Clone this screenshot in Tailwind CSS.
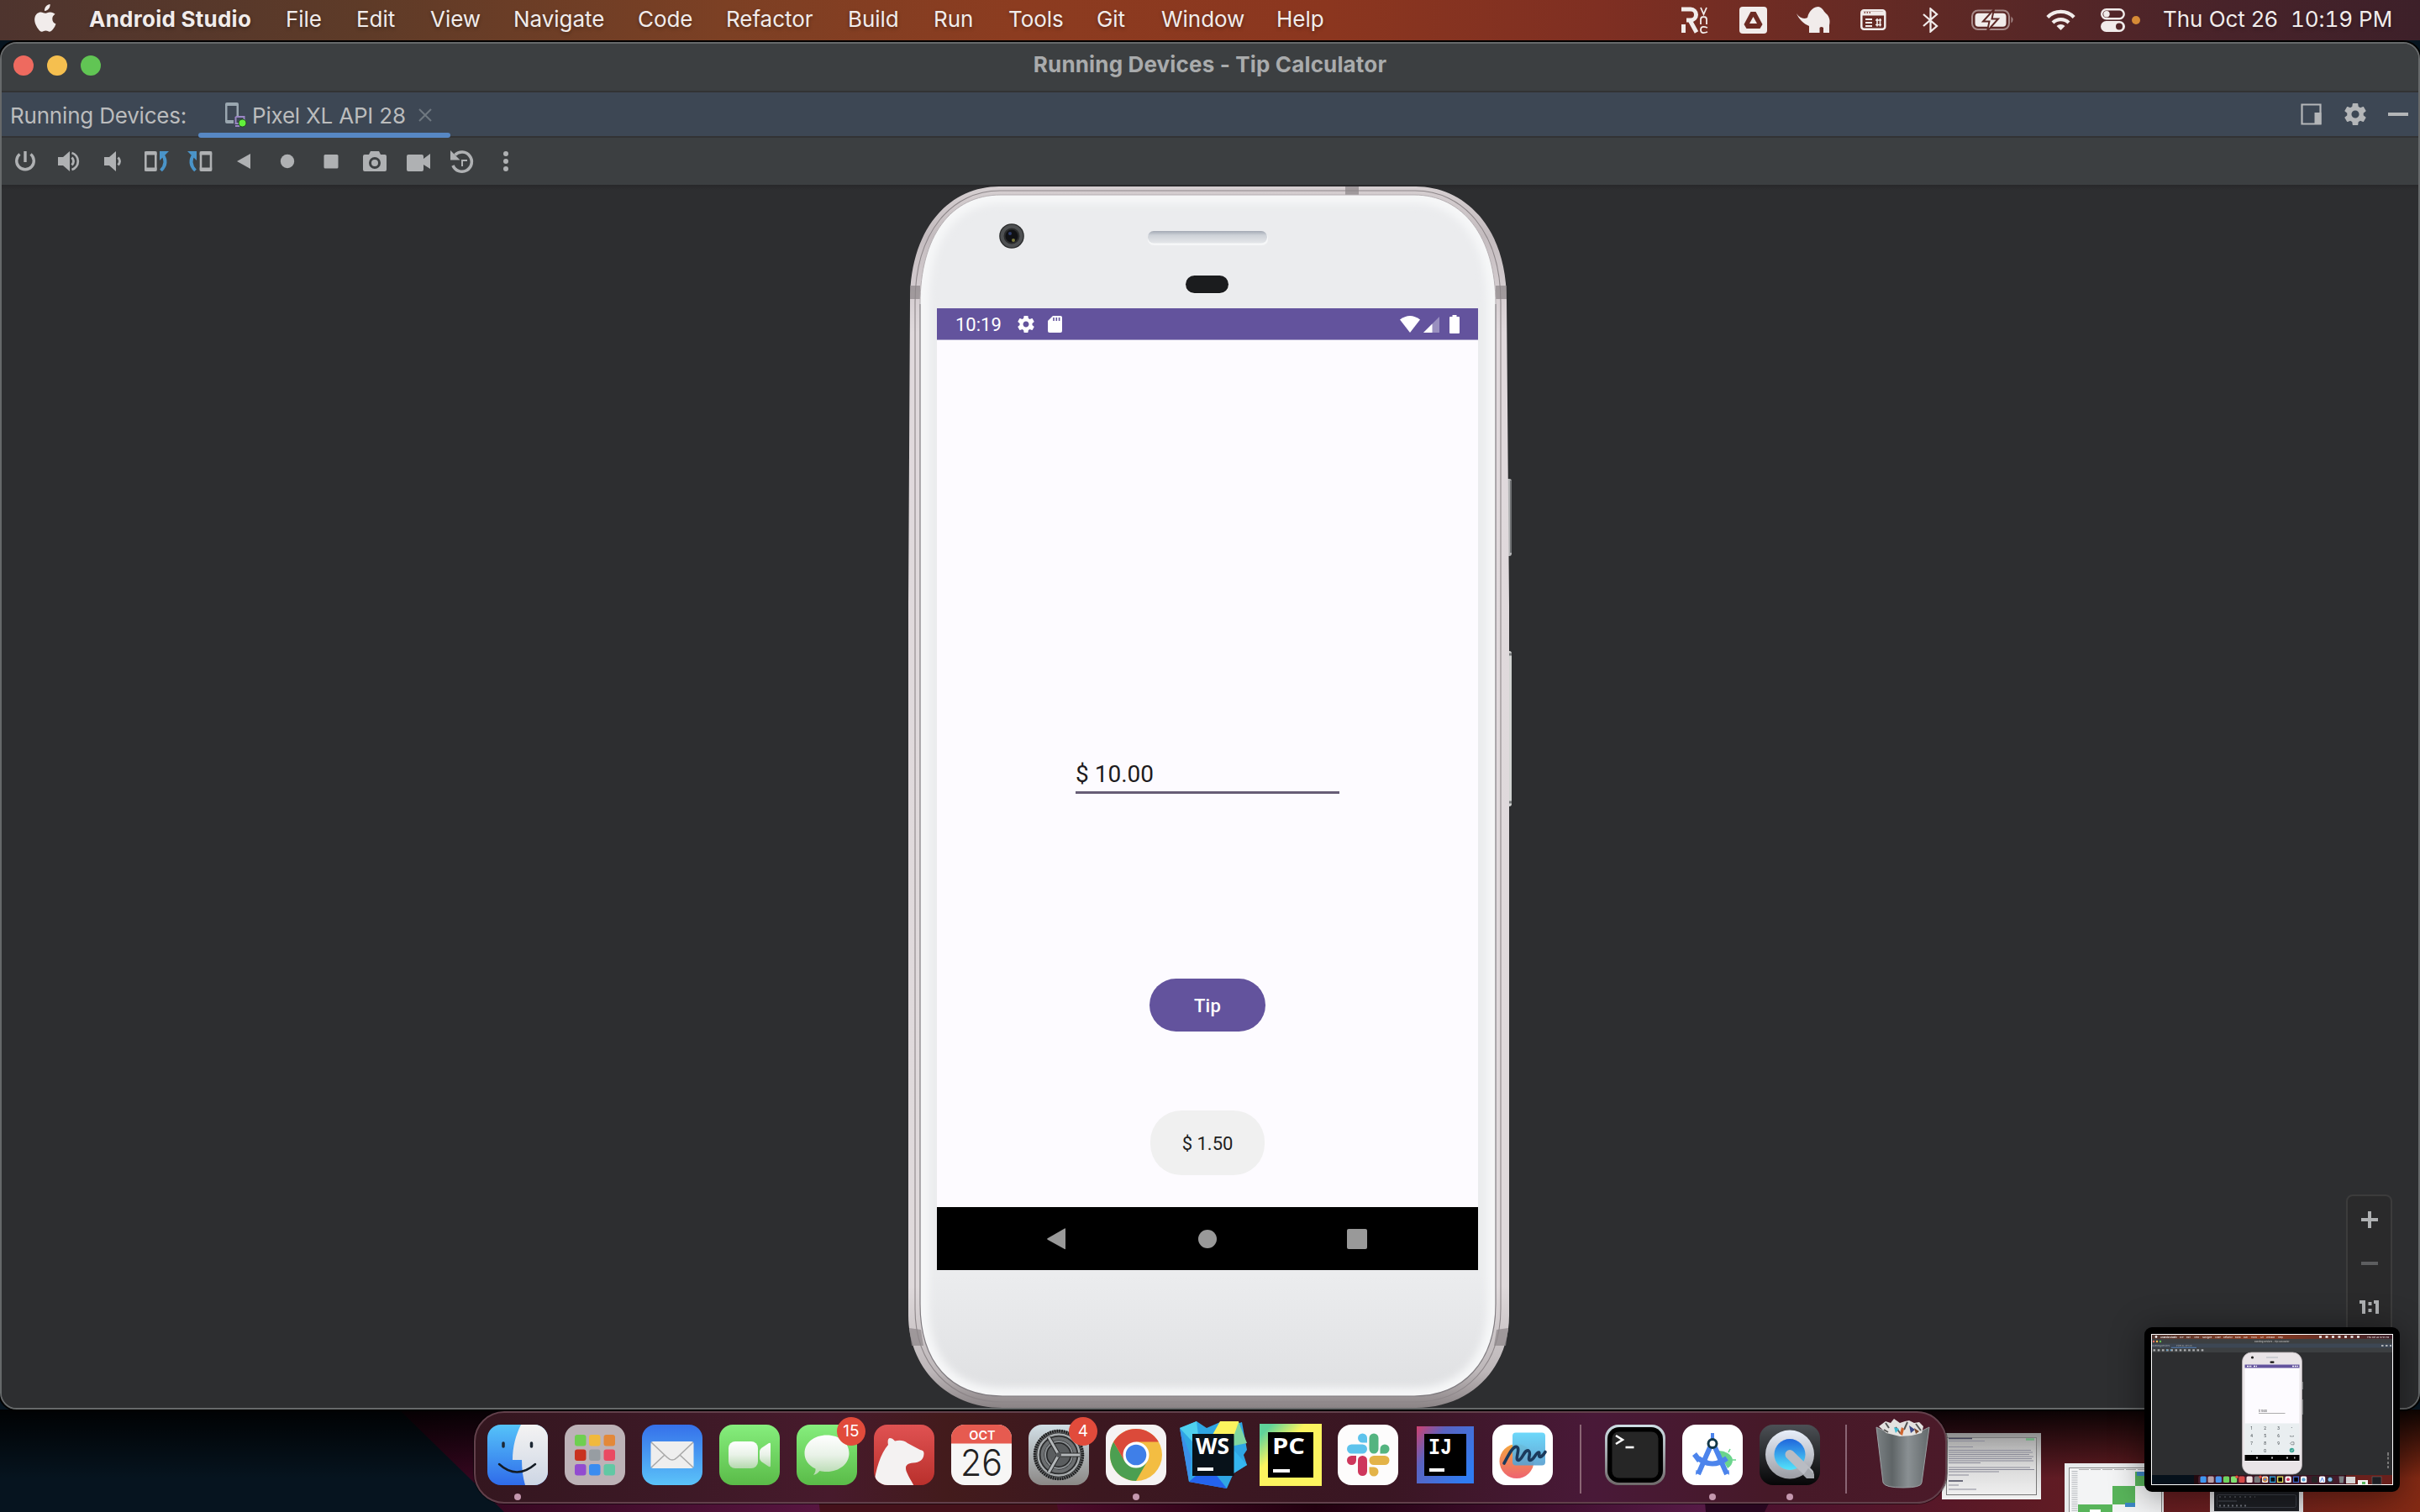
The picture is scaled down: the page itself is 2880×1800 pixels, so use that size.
<!DOCTYPE html>
<html lang="en">
<head>
<meta charset="utf-8">
<title>Running Devices - Tip Calculator</title>
<script src="https://cdn.jsdelivr.net/npm/@tailwindcss/browser@4"></script>
</head>
<body class="relative w-[2880px] h-[1800px] overflow-hidden bg-[#06141f] font-['Inter',sans-serif]">

<!-- Wallpaper -->
<svg class="absolute inset-0" width="2880" height="1800" viewBox="0 0 2880 1800">
  <defs>
    <linearGradient id="wpR" x1="2060" x2="2880" y1="0" y2="0" gradientUnits="userSpaceOnUse"><stop offset="0" stop-color="#4a1030"/><stop offset=".4" stop-color="#5c1a25"/><stop offset=".7" stop-color="#6b1f20"/><stop offset="1" stop-color="#842a14"/></linearGradient>
    <linearGradient id="wpM" x1="470" x2="975" y1="0" y2="0" gradientUnits="userSpaceOnUse"><stop offset="0" stop-color="#2e0418"/><stop offset="1" stop-color="#571540"/></linearGradient>
    <linearGradient id="wpN" x1="1258" x2="2028" y1="0" y2="0" gradientUnits="userSpaceOnUse"><stop offset="0" stop-color="#4c0b2a"/><stop offset=".4" stop-color="#22000f"/><stop offset="1" stop-color="#561a46"/></linearGradient>
    <linearGradient id="wpS" x1="0" x2="0" y1="1678" y2="1760" gradientUnits="userSpaceOnUse"><stop offset="0" stop-color="#000" stop-opacity=".9"/><stop offset=".45" stop-color="#000" stop-opacity=".5"/><stop offset="1" stop-color="#000" stop-opacity="0"/></linearGradient>
  </defs>
  <rect width="2880" height="1800" fill="#06141f"/>
  <rect x="634" y="46" width="1200" height="4" fill="#b5651f"/>
  <path d="M475 1678H2880V1800H600Z" fill="url(#wpM)"/>
  <path d="M960 1678H1300V1800H976Z" fill="#44111a"/>
  <path d="M1230 1678H2040V1800H1260Z" fill="url(#wpN)"/>
  <path d="M2020 1678H2140V1800H2030Z" fill="#28061f"/>
  <path d="M2160 1678H2880V1800H2100Z" fill="url(#wpR)"/>
  <rect y="1678" width="2880" height="82" fill="url(#wpS)"/>
</svg>

<div class="relative flex h-[1678px] w-full flex-col">

<!-- Menu bar -->
<header class="flex h-12 w-full shrink-0 items-center bg-[linear-gradient(90deg,#4e342e_0%,#5e3b28_15%,#7c4024_30%,#8c3c20_42%,#8b361f_55%,#7f2f22_66%,#5f2925_80%,#48232a_92%,#3d2029_100%)] pl-10 text-[26px] leading-[46px] tracking-[-0.05px] text-[#f1eceb] [text-shadow:0_2px_4px_rgba(0,0,0,0.35)]">
  <svg class="mr-[38px] -mt-1 shrink-0" width="28" height="34" viewBox="0 0 28 34" fill="#f1eceb"><path d="M19.6 0c.3 2.200-.6 4.200-1.700 5.600-1.200 1.500-3.100 2.600-4.900 2.500-.3-2.100.7-4.200 1.800-5.500C16 1.100 18 .1 19.600 0z"/><path d="M25.600 11.700c-2.200 1.400-3.300 3.300-3.300 5.700 0 2.800 1.500 5 4.200 6.100-.7 2.200-1.800 4.200-3.200 6.100-1.100 1.500-2.300 3.100-4.200 3.100-1.800 0-2.400-1.100-4.600-1.100s-2.900 1.100-4.600 1.200c-1.800.1-3.200-1.700-4.400-3.300C2 24.600.3 19.400 1.600 15.200c.9-3.300 3.800-5.700 7-5.700 2.100 0 3.900 1.300 5.200 1.300 1.200 0 3.400-1.500 6-1.400 2.300.1 4.500 1 5.800 2.300z"/></svg>
  <nav class="-mt-[2px] flex whitespace-nowrap">
    <span class="w-[234px] font-bold tracking-[0.25px]">Android Studio</span>
    <span class="w-[84px]">File</span>
    <span class="w-[88px]">Edit</span>
    <span class="w-[99px]">View</span>
    <span class="w-[148px]">Navigate</span>
    <span class="w-[105px]">Code</span>
    <span class="w-[145px]">Refactor</span>
    <span class="w-[102px]">Build</span>
    <span class="w-[89px]">Run</span>
    <span class="w-[105px]">Tools</span>
    <span class="w-[77px]">Git</span>
    <span class="w-[137px]">Window</span>
    <span>Help</span>
  </nav>
  <div class="ml-auto flex items-center">
    <svg class="mr-9" width="33" height="32" viewBox="0 0 33 32" fill="none" stroke="#f1eceb"><path d="M0 3h11a6.500 6.500 0 0 1 0 13H6M10 16l8 14.500" stroke-width="5"/><path d="M2.500 21v10" stroke-width="5"/><path d="M23 1l3.500 8L30 1M23 21v-6q0-3 3.500-3T30 15v6M31 25q-8-3-8 2.500T31 30" stroke-width="1.800"/></svg>
    <svg class="mr-[34px]" width="34" height="32" viewBox="0 0 34 32"><rect width="33" height="32" rx="4" fill="#f1eceb"/><path d="M13.500 6h6l8 15-3 5h-16l-3-5z" fill="#6c2a23"/><path d="M16.500 12l4.500 8h-9z" fill="#f1eceb"/></svg>
    <svg class="mr-9" width="40" height="32" viewBox="0 0 40 32" fill="#f1eceb"><path d="M0 8C4 14 9 15 13 13 15 4 21 0 26 0c5 1 6 5 9 8 5 4 5 10 4 14v9h-7v-6q-2.500-2-4.500 0v6H15v-8C8 20 3 15 0 8z"/></svg>
    <svg class="mr-[43px]" width="31" height="26" viewBox="0 0 31 26" fill="none" stroke="#f1eceb" stroke-width="2.500"><rect x="1.300" y="1.300" width="28" height="22.500" rx="3"/><path d="M2 5h27" stroke-width="5"/><path d="M6 12h8M6 16h8M6 20h8" stroke-width="2"/><path d="M18 13h7M18 18.500h7M20 11v9.500M23.500 11v9.500" stroke-width="1.600"/><path d="M4.500 4h1.500m1.500 0H9m1.500 0H12" stroke="#6c2a23" stroke-width="1.600"/></svg>
    <svg class="mr-[39px]" width="19" height="30" viewBox="0 0 19 30" fill="none" stroke="#f1eceb" stroke-width="2.300"><path d="M1 8l16 14-7.500 6.500v-27L17 8 1 22"/></svg>
    <svg class="mr-[38px]" width="51" height="26" viewBox="0 0 51 26"><rect x="1" y="1.500" width="44" height="22.500" rx="7" fill="none" stroke="#f1eceb" stroke-opacity=".5" stroke-width="2"/><rect x="4.500" y="4.800" width="37" height="16" rx="4" fill="#f1eceb"/><path d="M47.500 8.500q4 4 0 8z" fill="#f1eceb" opacity=".5"/><path d="M27 0L14 14.500h7.500L19 26l13-14.500h-7.500z" fill="#f1eceb" stroke="#5c2926" stroke-width="2"/></svg>
    <svg class="mr-[30px]" width="35" height="26" viewBox="0 0 35 26" fill="none" stroke="#f1eceb" stroke-width="4.200"><path d="M1.800 9.500a22 22 0 0 1 31.400 0"/><path d="M8 16a13.500 13.500 0 0 1 19 0"/><path d="M17.500 25l-5-5a7 7 0 0 1 10 0z" fill="#f1eceb" stroke="none"/></svg>
    <svg class="mr-2" width="29" height="28" viewBox="0 0 29 28"><rect x="1.200" y="1.200" width="26.500" height="11" rx="5.500" fill="none" stroke="#f1eceb" stroke-width="2.400"/><circle cx="7" cy="6.700" r="3.700" fill="#f1eceb"/><rect y="15" width="29" height="13" rx="6.500" fill="#f1eceb"/><circle cx="22" cy="21.500" r="4" fill="#532729"/></svg>
    <span class="mr-[27px] size-[10px] rounded-full bg-[#d68b36]"></span>
    <span class="-mt-[2px] w-[152px] whitespace-nowrap">Thu Oct 26</span>
    <span class="-mt-[2px] w-[154px] whitespace-nowrap tabular-nums">10:19 PM</span>
  </div>
</header>

<!-- IDE tool window -->
<main class="mt-[2px] flex min-h-0 w-full flex-1 flex-col overflow-hidden rounded-[20px] border-2 border-[#66696a] bg-[#2d2e30] shadow-[0_0_0_2px_#000]">
  <div class="relative flex h-[56px] shrink-0 items-center bg-[#3c3f41] pb-1 pl-[14px]">
    <div class="flex gap-4"><span class="size-6 rounded-full bg-[#ee6a5f]"></span><span class="size-6 rounded-full bg-[#f5bf4f]"></span><span class="size-6 rounded-full bg-[#61c554]"></span></div>
    <h1 class="absolute inset-x-0 top-[9px] text-center text-[26px] leading-[32px] font-bold tracking-[0.15px] text-[#a9abac]">Running Devices - Tip Calculator</h1>
  </div>
  <div class="flex h-[56px] shrink-0 items-center border-y-2 border-[#323334] bg-[#3d4754] pl-[10px] text-[26px] tracking-[-0.2px] text-[#bbbcbd]">
    <span class="mt-[3px] w-[224px] whitespace-nowrap">Running Devices:</span>
    <div class="relative flex h-[52px] w-[300px] items-center pl-[32px]">
      <svg class="mt-[2px]" width="32" height="30" viewBox="0 0 32 30"><path fill-rule="evenodd" d="M2 0h12a2 2 0 0 1 2 2v14h-2.500V4h-11v17H10v4H2a2 2 0 0 1-2-2V2a2 2 0 0 1 2-2z" fill="#9aa7b0"/><path d="M12.500 17h10v7M12.500 17v8h5M12 28h5" fill="none" stroke="#9a86c4" stroke-width="2"/><circle cx="20.500" cy="24.500" r="4.500" fill="#62f03c" stroke="#1f4a1c" stroke-width="1"/></svg>
      <span class="mt-[3px] w-[198px] whitespace-nowrap">Pixel XL API 28</span>
      <svg class="mt-[2px]" width="16" height="16" viewBox="0 0 16 16" stroke="#6f7880" stroke-width="2"><path d="M1 1l14 14M15 1L1 15"/></svg>
      <span class="absolute -bottom-[2px] left-0 h-[6px] w-[300px] rounded-full bg-[#5788c4]"></span>
    </div>
    <div class="mr-[12px] ml-auto flex items-center gap-[26px]">
      <svg width="26" height="26" viewBox="0 0 26 26"><path d="M1.500 1.500h22v23h-22z" fill="none" stroke="#b4b6b8" stroke-width="2.200"/><path d="M16.500 11h8v14h-8z" fill="#b4b6b8"/></svg>
      <svg width="26" height="26" viewBox="2 2 20 20" fill="#b4b6b8"><path d="M19.430 12.980c.04-.32.07-.64.07-.98s-.03-.66-.07-.98l2.110-1.650c.19-.15.24-.42.12-.64l-2-3.460c-.12-.22-.39-.3-.61-.22l-2.490 1c-.52-.4-1.080-.73-1.690-.98l-.38-2.650C14.460 2.180 14.250 2 14 2h-4c-.25 0-.46.18-.49.42l-.38 2.650c-.61.25-1.170.59-1.690.98l-2.490-1c-.23-.09-.49 0-.61.22l-2 3.460c-.13.22-.07.49.12.64l2.110 1.650c-.04.32-.07.65-.07.98s.03.66.07.98l-2.110 1.650c-.19.15-.24.42-.12.64l2 3.460c.12.22.39.3.61.22l2.490-1c.52.4 1.080.73 1.690.98l.38 2.650c.03.24.24.42.49.42h4c.25 0 .46-.18.49-.42l.38-2.650c.61-.25 1.170-.59 1.690-.98l2.490 1c.23.09.49 0 .61-.22l2-3.460c.12-.22.07-.49-.12-.64l-2.110-1.650zM12 15.500c-1.930 0-3.500-1.570-3.500-3.500s1.570-3.500 3.500-3.500 3.500 1.570 3.500 3.500-1.570 3.500-3.500 3.500z"/></svg>
      <span class="h-1 w-6 bg-[#b4b6b8]"></span>
    </div>
  </div>
  <div class="flex h-[56px] shrink-0 items-center bg-[#3c3f41] pl-[2px] [&>svg]:w-[52px]">
    <svg height="32" viewBox="-26 -16 52 32" fill="none" stroke="#afb1b3" stroke-width="3.400"><path d="M0-12V1M-6.500-8.500a10.300 10.300 0 1 0 13 0"/></svg>
    <svg height="32" viewBox="-26 -16 52 32"><path d="M-13-5h6l8-7v24l-8-7h-6z" fill="#afb1b3"/><path d="M3.500-4.500q4 4.500 0 9M3.500-10a10.500 10.500 0 0 1 0 20" fill="none" stroke="#afb1b3" stroke-width="2.800"/></svg>
    <svg height="32" viewBox="-26 -16 52 32"><path d="M-10-5h6l8-7v24l-8-7h-6z" fill="#afb1b3"/><path d="M6.500-4.500q4 4.500 0 9" fill="none" stroke="#afb1b3" stroke-width="2.800"/></svg>
    <svg height="32" viewBox="-26 -16 52 32"><rect x="-12.700" y="-10.700" width="12" height="21.500" rx="1" fill="none" stroke="#afb1b3" stroke-width="2.600"/><path d="M-14-9.500H.5M-14 9.500H.5" stroke="#afb1b3" stroke-width="4"/><path d="M5.500 11q9-9 2-19" fill="none" stroke="#4a94c8" stroke-width="3.800"/><path d="M4-12h11L4-1z" fill="#4a94c8"/></svg>
    <svg height="32" viewBox="-26 -16 52 32"><rect x="1" y="-10.700" width="12" height="21.500" rx="1" fill="none" stroke="#afb1b3" stroke-width="2.600"/><path d="M-.3-9.500h14.500M-.3 9.500h14.500" stroke="#afb1b3" stroke-width="4"/><path d="M-5.500 11q-9-9-2-19" fill="none" stroke="#4a94c8" stroke-width="3.800"/><path d="M-4-12h-11l11 11z" fill="#4a94c8"/></svg>
    <svg height="32" viewBox="-26 -16 52 32"><path d="M8-9V9L-8 0z" fill="#afb1b3"/></svg>
    <svg height="32" viewBox="-26 -16 52 32"><circle r="8.200" fill="#afb1b3"/></svg>
    <svg height="32" viewBox="-26 -16 52 32"><rect x="-8.500" y="-8" width="17" height="16.500" rx="1.500" fill="#afb1b3"/></svg>
    <svg height="32" viewBox="-26 -16 52 32"><path d="M-5-12H5l2 4h5q2 0 2 2v16q0 2-2 2h-24q-2 0-2-2V-6q0-2 2-2h5z" fill="#afb1b3"/><circle cy="2" r="5.500" fill="none" stroke="#3c3f41" stroke-width="3"/></svg>
    <svg height="32" viewBox="-26 -16 52 32"><path d="M-12-8H4q2 0 2 2v3l8-6V9L6 4v6q0 2-2 2h-16q-2 0-2-2V-6q0-2 2-2z" fill="#afb1b3"/></svg>
    <svg height="32" viewBox="-26 -16 52 32"><path d="M-8.500-7.500A11.600 11.600 0 1 1-11 5" fill="none" stroke="#afb1b3" stroke-width="3.600"/><path d="M-14-13v11.500h11.500z" fill="#afb1b3"/><path d="M0 6V-1h6" fill="none" stroke="#afb1b3" stroke-width="2"/></svg>
    <svg height="32" viewBox="-26 -16 52 32" fill="#afb1b3"><circle cy="-9" r="3"/><circle r="3"/><circle cy="9" r="3"/></svg>
  </div>

  <section class="relative flex min-h-0 flex-1 justify-center bg-[linear-gradient(#28282a_0,#2d2e30_6px,#2d2e30_100%)] pt-[2px] pr-[2px]">
    <!-- Emulated phone -->
    <div class="relative h-[1454px] w-[716px]">
      <svg class="absolute top-0 left-0" width="720" height="1454" viewBox="0 0 720 1454">
        <defs>
          <linearGradient id="metal" x1="0" y1="0" x2="0" y2="1"><stop offset="0" stop-color="#d6cfd1"/><stop offset=".04" stop-color="#c4bcbf"/><stop offset=".12" stop-color="#e0d9dc"/><stop offset=".9" stop-color="#dfd9db"/><stop offset=".97" stop-color="#bdb7b9"/><stop offset="1" stop-color="#8b8486"/></linearGradient>
          <linearGradient id="glass" x1="0" y1="0" x2="0" y2="1"><stop offset="0" stop-color="#ebecee"/><stop offset=".9" stop-color="#ebecee"/><stop offset="1" stop-color="#dfe0e2"/></linearGradient>
          <linearGradient id="spk" x1="0" y1="0" x2="0" y2="1"><stop offset="0" stop-color="#a3a9b4"/><stop offset=".35" stop-color="#ced2d8"/><stop offset="1" stop-color="#e4e6e9"/></linearGradient>
          <clipPath id="gc"><path d="M110 10H602C660 10 699 60 699 140V1330C699 1400 660 1440 602 1440H112C50 1440 14 1400 14 1330V140C14 60 50 10 110 10Z"/></clipPath>
          <filter id="soft"><feGaussianBlur stdDeviation="5"/></filter>
        </defs>
        <rect x="709" y="348" width="9" height="92" rx="3" fill="#b4b5b6"/><rect x="716" y="350" width="2" height="86" fill="#6f7173"/>
        <rect x="709" y="553" width="9" height="185" rx="3" fill="#d2d4d2"/><path d="M713 557h5M713 733h5" stroke="#77797a" stroke-width="3"/>
        <path d="M108 0H604C660 0 712 46 712 136L715 500V1344C715 1404 672 1454 604 1454H112C44 1454 0 1404 0 1344V500L2 136C2 46 52 0 108 0Z" fill="url(#metal)"/>
        <path d="M109 5H603C660 5 705 54 705 138V1336C705 1402 664 1447 603 1447H112C50 1447 8 1402 8 1336V138C8 54 52 5 109 5Z" fill="none" stroke="#8d8689" stroke-width="1.100"/>
        <path d="M520 0h16v10h-16zM2 118h12v16H2zM699 118h13v16h-13zM1 1359l14 2 3 19H4zM714 1359l-14 2-3 19h14z" fill="#8f888b" fill-opacity=".75"/>
        <path d="M110 10H602C660 10 699 60 699 140V1330C699 1400 660 1440 602 1440H112C50 1440 14 1400 14 1330V140C14 60 50 10 110 10Z" fill="url(#glass)"/>
        <g clip-path="url(#gc)"><path filter="url(#soft)" d="M110 10H602C660 10 699 60 699 140V1330C699 1400 660 1440 602 1440H112C50 1440 14 1400 14 1330V140C14 60 50 10 110 10Z" fill="none" stroke="#f6f7f8" stroke-width="20"/></g>
        <path d="M14 140V1330C14 1400 50 1440 112 1440H602C660 1440 699 1400 699 1330V140" fill="none" stroke="#807c80" stroke-width="1.200"/>
        <path d="M14 140C14 60 50 10 110 10H602C660 10 699 60 699 140" fill="none" stroke="#b5afb2" stroke-width="1"/>
        <circle cx="123" cy="59" r="14.800" fill="#2a2b2c"/><circle cx="123" cy="59" r="11.500" fill="none" stroke="#4e5052" stroke-width="4"/><circle cx="123" cy="59" r="7.500" fill="#101114"/><circle cx="121" cy="56" r="2" fill="#2d3b6b"/><circle cx="125" cy="64" r="2" fill="#7c7a3a"/>
        <rect x="285" y="54" width="143" height="16" rx="7" fill="#f6f7f8"/><rect x="285" y="53" width="142" height="14.500" rx="7" fill="url(#spk)"/>
        <rect x="330" y="107" width="51" height="21" rx="10" fill="#f9f9f9"/><rect x="330" y="106" width="51" height="21" rx="10.500" fill="#1b1c1e"/>
      </svg>
      <div class="relative mt-[145px] ml-[34px] flex h-[1145px] w-[644px] flex-col bg-[#fdfbff] font-['Roboto',sans-serif]">
        <div class="flex h-[38px] shrink-0 items-center border-b border-[#a59cc6] bg-[#63539d] pl-[22px] text-white">
          <span class="mt-[3px] w-[74px] text-[22px] leading-[34px]">10:19</span>
          <svg class="mr-[16px]" width="20" height="20" viewBox="2 2 20 20" fill="#fff"><path d="M19.430 12.980c.04-.32.07-.64.07-.98s-.03-.66-.07-.98l2.110-1.650c.19-.15.24-.42.12-.64l-2-3.460c-.12-.22-.39-.3-.61-.22l-2.490 1c-.52-.4-1.080-.73-1.690-.98l-.38-2.650C14.460 2.180 14.250 2 14 2h-4c-.25 0-.46.18-.49.42l-.38 2.650c-.61.25-1.170.59-1.690.98l-2.490-1c-.23-.09-.49 0-.61.22l-2 3.460c-.13.22-.07.49.12.64l2.110 1.650c-.04.32-.07.65-.07.98s.03.66.07.98l-2.110 1.650c-.19.15-.24.42-.12.64l2 3.460c.12.22.39.3.61.22l2.490-1c.52.4 1.080.73 1.690.98l.38 2.650c.03.24.24.42.49.42h4c.25 0 .46-.18.49-.42l.38-2.650c.61-.25 1.170-.59 1.690-.98l2.490 1c.23.09.49 0 .61-.22l2-3.460c.12-.22.07-.49-.12-.64l-2.110-1.650zM12 15.500c-1.930 0-3.500-1.570-3.500-3.500s1.570-3.500 3.500-3.500 3.500 1.570 3.500 3.500-1.570 3.500-3.500 3.500z"/></svg>
          <svg width="17" height="20" viewBox="0 0 17 20"><path d="M6 0h9q2 0 2 2v16q0 2-2 2H2q-2 0-2-2V6z" fill="#fff"/><path d="M7 2v4M10.300 2v4M13.600 2v4" stroke="#63539d" stroke-width="1.600"/></svg>
          <div class="mr-[22px] ml-auto flex items-center">
            <svg class="mr-1" width="24" height="20" viewBox="0 0 24 20"><path d="M0 4.500Q12-4.500 24 4.500L12 20z" fill="#fff"/></svg>
            <svg class="mr-3" width="19" height="20" viewBox="0 0 19 20"><path d="M19 1v19H0z" fill="#fff" fill-opacity=".35"/><path d="M10.500 9.500V20H0z" fill="#fff"/></svg>
            <svg width="12" height="22" viewBox="0 0 12 22"><path d="M3.500 0h5v2H11q1 0 1 1v18q0 1-1 1H1q-1 0-1-1V3q0-1 1-1h2.500z" fill="#fff"/></svg>
          </div>
        </div>
        <div class="flex flex-1 flex-col items-center">
          <div class="mt-[500px] h-[40px] w-[314px] border-b-[3px] border-[#675d76] text-[28px] leading-[33px] text-[#1d1b20]">$ 10.00</div>
          <button class="mt-[220px] h-[63px] w-[138px] rounded-full bg-[#63539d] pt-[2px] text-[22px] font-medium tracking-[0.2px] text-white">Tip</button>
          <div class="mt-[94px] flex h-[77px] w-[136px] items-center justify-center rounded-[37px] bg-[#f0f0f0] pt-[2px] text-[22px] text-[#202020]">$ 1.50</div>
        </div>
        <div class="flex h-[75px] shrink-0 items-center bg-black pl-[131px]">
          <svg class="mr-[158px]" width="22" height="26" viewBox="0 0 22 26"><path d="M22 1v23.500q0 1-1 .5L.6 13.700q-.8-.7 0-1.400L21 .5q1-.5 1 .5z" fill="#999"/></svg>
          <span class="mr-[155px] size-[22px] rounded-full bg-[#999]"></span>
          <span class="size-[24px] rounded-[2px] bg-[#999]"></span>
        </div>
      </div>
    </div>
    <!-- Zoom controls -->
    <div class="absolute top-[1202px] right-[31px] flex h-[240px] w-[55px] flex-col items-center rounded-[8px] border-2 border-[#3c3c3c] bg-[#2a2a2b] pt-[18px]">
      <svg width="20" height="20" viewBox="0 0 20 20" fill="#afb1b3"><path d="M8 0h4v8h8v4h-8v8H8v-8H0V8h8z"/></svg>
      <span class="mt-[40px] h-1 w-5 bg-[#5d5e60]"></span>
      <svg class="mt-[42px]" width="24" height="16" viewBox="0 0 24 16" fill="#afb1b3"><path d="M0 0h7v16H3V4H0zM17 0h6v16h-4V4h-2zM10.500 2h4v4h-4zM10.500 10h4v4h-4z"/></svg>
    </div>
  </section>
</main>
</div>

<!-- Minimised windows beside the dock -->
<svg class="absolute top-[1700px] left-[2300px]" width="460" height="100" viewBox="2300 1700 460 100">
  <defs><linearGradient id="docg" x1="0" y1="0" x2="0" y2="1"><stop offset="0" stop-color="#8e8e8e"/><stop offset=".5" stop-color="#d4d4d4"/><stop offset="1" stop-color="#f2f2f2"/></linearGradient></defs>
  <rect x="2311" y="1706" width="118" height="79" fill="url(#docg)"/><rect x="2316.500" y="1711.500" width="107" height="68" fill="#fff" fill-opacity=".12" stroke="#777" />
  <path d="M2319 1712.500h28" stroke="#44445a" stroke-width="1.500"/><path d="M2411 1713.500h10" stroke="#6aaa7a" stroke-width="2.500"/>
  <path d="M2319 1715.500h43M2319 1722.500h29M2319 1726.500h98M2319 1729h100M2319 1731.500h96M2319 1734h101M2319 1736.500h99M2319 1739h101M2319 1741.500h38M2319 1747h97M2319 1749.500h102M2319 1752h60M2319 1756h24M2319 1773h33M2319 1768h12" stroke="#8a8a98" stroke-width="1"/><path d="M2319 1763h17" stroke="#44445a" stroke-width="1.500"/>
  <rect x="2457" y="1742" width="118" height="60" fill="#e9ebec"/><rect x="2462.500" y="1747.500" width="110" height="60" fill="#f3f4f5" stroke="#888"/>
  <path d="M2474 1749.500h90" stroke="#aaa" stroke-dasharray="12 2"/><path d="M2469 1751v49" stroke="#b5b8bd" stroke-width="7" stroke-dasharray="1 1.600"/>
  <path d="M2541 1752h14v17h-14zM2514 1769h27v22h-27zM2473 1791h41v9h-41z" fill="#58b45a"/><path d="M2543 1752h12v5h-12zM2529 1789h12v5h-12z" fill="#3c87c4"/><rect x="2487" y="1797" width="13" height="3" fill="#fff"/>
  <rect x="2630" y="1770" width="111" height="32" fill="#e4e4e6"/><rect x="2635" y="1770" width="101" height="29" fill="#1d1f24"/>
  <rect x="2638.500" y="1779.500" width="94" height="15" rx="2" fill="none" stroke="#3c4048"/><path d="M2641 1782h43" stroke="#6b7078" stroke-dasharray="2 4"/><path d="M2640 1787h22" stroke="#4c5058"/><path d="M2641 1792.500h32" stroke="#70757d" stroke-width="2" stroke-dasharray="2 3"/>
</svg>

<!-- Dock -->
<div class="absolute top-[1680px] left-[564px] flex h-[110px] w-[1753px] items-start rounded-[36px] border-2 border-[#62404b] bg-[linear-gradient(90deg,#34161f_0%,#3d1926_14%,#471a2c_24%,#431b1c_32%,#3c1820_42%,#3a1623_62%,#491938_76%,#461928_88%,#4b1a29_100%)] pt-[14px] pl-[4px] shadow-[0_0_0_1px_rgba(0,0,0,0.5)] [&_svg]:block [&_svg]:overflow-visible">
  <div class="flex shrink-0 [&>div]:flex [&>div]:w-[92px] [&>div]:flex-col [&>div]:items-center [&>div]:relative">
    <div><!-- Finder -->
      <svg width="72" height="72" viewBox="0 0 72 72"><defs><linearGradient id="fi" x1="0" y1="0" x2="0" y2="1"><stop offset="0" stop-color="#55c3f9"/><stop offset="1" stop-color="#2f6bea"/></linearGradient><linearGradient id="fi2" x1="0" y1="0" x2="0" y2="1"><stop offset="0" stop-color="#f4f3f3"/><stop offset="1" stop-color="#cdd6e4"/></linearGradient><clipPath id="rc"><rect width="72" height="72" rx="16"/></clipPath></defs><g clip-path="url(#rc)"><rect width="72" height="72" fill="url(#fi)"/><path d="M40 0C34 12 30 26 30 42h11c0 10 1 20 4 30h27V0z" fill="url(#fi2)"/></g><path d="M19 22v4M52.500 22v4" stroke="#1c2733" stroke-width="3.500" stroke-linecap="round"/><path d="M14 47q21 19 43 0" fill="none" stroke="#131b24" stroke-width="2.500" stroke-linecap="round"/></svg>
      <span class="mt-[10px] size-2 rounded-full bg-[#c497ae]"></span>
    </div>
    <div><!-- Launchpad -->
      <svg width="72" height="72" viewBox="0 0 72 72"><rect width="72" height="72" rx="16" fill="#bdb2b7"/><g><rect x="12" y="12" width="13.500" height="13.500" rx="3" fill="#6fcf50"/><rect x="29" y="12" width="13.500" height="13.500" rx="3" fill="#f1b93c"/><rect x="46.500" y="12" width="13.500" height="13.500" rx="3" fill="#e3883a"/><rect x="12" y="29.500" width="13.500" height="13.500" rx="3" fill="#c9311f"/><rect x="29" y="29.500" width="13.500" height="13.500" rx="3" fill="#979da2"/><rect x="46.500" y="29.500" width="13.500" height="13.500" rx="3" fill="#ea4a62"/><rect x="12" y="47" width="13.500" height="13.500" rx="3" fill="#924bd0"/><rect x="29" y="47" width="13.500" height="13.500" rx="3" fill="#3a8cf0"/><rect x="46.500" y="47" width="13.500" height="13.500" rx="3" fill="#62c8a4"/></g></svg>
    </div>
    <div><!-- Mail -->
      <svg width="72" height="72" viewBox="0 0 72 72"><defs><linearGradient id="ma" x1="0" y1="0" x2="0" y2="1"><stop offset="0" stop-color="#3570ea"/><stop offset="1" stop-color="#5bc3f9"/></linearGradient></defs><rect width="72" height="72" rx="16" fill="url(#ma)"/><rect x="10.500" y="20" width="51" height="32" rx="3" fill="#eeeeee"/><path d="M11 21l19 18q6 6 12 0l19-18M11 51l16-15M61 51L45 36" fill="none" stroke="#a9a9a9" stroke-width="1.600"/></svg>
    </div>
    <div><!-- FaceTime -->
      <svg width="72" height="72" viewBox="0 0 72 72"><defs><linearGradient id="gr" x1="0" y1="0" x2="0" y2="1"><stop offset="0" stop-color="#86ee7d"/><stop offset="1" stop-color="#5abb48"/></linearGradient><linearGradient id="wh" x1="0" y1="0" x2="0" y2="1"><stop offset="0" stop-color="#fff"/><stop offset=".5" stop-color="#e9f2e8"/><stop offset="1" stop-color="#b5d9ae"/></linearGradient></defs><rect width="72" height="72" rx="16" fill="url(#gr)"/><rect x="11" y="20" width="35" height="32" rx="8" fill="url(#wh)"/><path d="M48 32q0-2 2-4l9-6q2-1 2 1v26q0 2-2 1l-9-6q-2-2-2-4z" fill="url(#wh)"/></svg>
    </div>
    <div><!-- Messages -->
      <svg width="72" height="72" viewBox="0 0 72 72"><rect width="72" height="72" rx="16" fill="url(#gr)"/><path d="M36 12.500c15 0 26.500 9 26.500 21.500S51 56 36 56c-3 0-6-.3-8.500-1q-3 4-7.500 5 3-4 2.500-7.500C14 48.500 9.500 42 9.500 34 9.500 21.500 21 12.500 36 12.500z" fill="url(#wh)"/></svg>
      <span class="absolute -top-[9px] left-[58px] flex h-[34px] w-[34px] items-center justify-center rounded-full bg-[#e14b3b] text-[19px] text-white">15</span>
    </div>
    <div><!-- Bear -->
      <svg width="72" height="72" viewBox="0 0 72 72"><defs><linearGradient id="be" x1="0" y1="0" x2="0" y2="1"><stop offset="0" stop-color="#e05252"/><stop offset="1" stop-color="#b9302c"/></linearGradient></defs><g clip-path="url(#rc)"><rect width="72" height="72" fill="url(#be)"/><path d="M0 72C2 54 8 34 17 24c-1-5 0-8 2-8s4 1 6 3.500c5-1.500 11-1.200 15 2.500l15 8q5 .5 4.500 5c-.5 7-5 10-13 10.500-9 1-10 5-7 12 2 5 5 9 8 15z" fill="#f4f2f2"/></g></svg>
    </div>
    <div><!-- Calendar -->
      <svg width="72" height="72" viewBox="0 0 72 72"><g clip-path="url(#rc)"><rect width="72" height="72" fill="#f7f6f5"/><rect width="72" height="22.500" fill="#e65b50"/></g><text x="37" y="17.500" text-anchor="middle" font-family="Inter" font-weight="600" font-size="14.500" fill="#fff">OCT</text><text x="36" y="61" text-anchor="middle" font-family="Inter" font-weight="300" font-size="44" textLength="50" lengthAdjust="spacingAndGlyphs" fill="#222">26</text></svg>
    </div>
    <div><!-- System Settings -->
      <svg width="72" height="72" viewBox="0 0 72 72"><defs><linearGradient id="se" x1="0" y1="0" x2="0" y2="1"><stop offset="0" stop-color="#d2dfe6"/><stop offset="1" stop-color="#8b8886"/></linearGradient></defs><rect width="72" height="72" rx="16" fill="url(#se)"/><circle cx="36" cy="36" r="30" fill="#6c6f71"/><circle cx="36" cy="36" r="28.500" fill="none" stroke="#1c1c1d" stroke-width="3.500" stroke-dasharray="1.700 1.100"/><circle cx="36" cy="36" r="24" fill="none" stroke="#2b2c2d" stroke-width="5"/><circle cx="36" cy="36" r="24.500" fill="none" stroke="#a9adaf" stroke-width="2.400"/><circle cx="36" cy="36" r="15.500" fill="#5a5d5f" stroke="#222324" stroke-width="4" /><circle cx="36" cy="36" r="16" fill="none" stroke="#898d90" stroke-width="2" /><path d="M36 36h25M36 36L24 15M36 36L24 57" stroke="#2b2c2d" stroke-width="5"/><path d="M36 36h25M36 36L24 15M36 36L24 57" stroke="#b4b8ba" stroke-width="3"/><circle cx="36" cy="36" r="3" fill="#55585a"/></svg>
      <span class="absolute -top-[9px] left-[58px] flex h-[34px] w-[34px] items-center justify-center rounded-full bg-[#e14b3b] text-[19px] text-white">4</span>
    </div>
    <div><!-- Chrome -->
      <svg width="72" height="72" viewBox="0 0 72 72"><rect width="72" height="72" rx="16" fill="#f5f3f3"/><circle cx="36" cy="36" r="31" fill="#f3bd42"/><path d="M9.200 20.500A31 31 0 0 0 36 67L49.400 43.700 36 36 22.600 43.700z" fill="#4c9f51"/><path d="M36 5a31 31 0 0 1 26.800 15.500H36L22.600 43.700 9.200 20.500A31 31 0 0 1 36 5z" fill="#db4a3a"/><circle cx="36" cy="36" r="15.500" fill="#fff"/><circle cx="36" cy="36" r="12.300" fill="#3f7fe8"/></svg>
      <span class="mt-[10px] size-2 rounded-full bg-[#c497ae]"></span>
    </div>
    <div><!-- WebStorm -->
      <svg width="72" height="72" viewBox="0 0 72 72"><path d="M-4 4L16-4 28 4 44-3 55 2 70-3 76 30 72 36 76 48 60 58 52 76 7 68z" fill="#2fa6e4"/><path d="M7 68L30 48 52 76z" fill="#2463ee"/><path d="M-4 4L16-4 20 30z" fill="#4fd0ee"/><path d="M-4 4L10 40 7 68z" fill="#3b90ea"/><path d="M44-4H66L70 16 55 12 35 12z" fill="#fcf35e"/><path d="M66-3L76 22 56 26z" fill="#7fd7a0"/><path d="M60 30L76 48 60 58z" fill="#35b6f0"/><rect x="11" y="11" width="49.500" height="50" fill="#08121a"/><text x="15" y="35" font-family="Open Sans" font-weight="700" font-size="26" textLength="40" lengthAdjust="spacingAndGlyphs" fill="#fff">WS</text><rect x="17" y="51" width="19" height="4" fill="#fff"/></svg>
    </div>
    <div><!-- PyCharm -->
      <svg width="72" height="72" viewBox="0 0 72 72"><defs><linearGradient id="pc" x1="0" y1="0" x2=".5" y2=".5"><stop offset=".2" stop-color="#5fd39a"/><stop offset=".75" stop-color="#fcf45f"/></linearGradient></defs><rect x="-1" y="-1" width="74" height="74" fill="url(#pc)"/><rect x="9" y="9" width="54" height="54" fill="#000"/><text x="14" y="35" font-family="Open Sans" font-weight="700" font-size="26" textLength="39" lengthAdjust="spacingAndGlyphs" fill="#fff">PC</text><rect x="15" y="53" width="20" height="4" fill="#fff"/></svg>
    </div>
    <div><!-- Slack -->
      <svg width="72" height="72" viewBox="0 0 72 72"><rect width="72" height="72" rx="16" fill="#fdfcfc"/><g fill="#5ec3ec"><rect x="11" y="23.500" width="24" height="11" rx="5.500"/><path d="M35 21.500h-5.500a5.500 5.500 0 1 1 5.500-5.500z"/></g><g fill="#54b480"><rect x="37.500" y="10.500" width="11" height="24" rx="5.500"/><path d="M50.500 34.500V29a5.500 5.500 0 1 1 5.500 5.500z"/></g><g fill="#e3b348"><rect x="37.500" y="37" width="24" height="11" rx="5.500"/><path d="M37.500 50.500H43a5.500 5.500 0 1 1-5.500 5.500z"/></g><g fill="#ce375c"><rect x="24" y="37" width="11" height="24" rx="5.500"/><path d="M22 37v5.500a5.500 5.500 0 1 1-5.500-5.500z"/></g></svg>
    </div>
    <div><!-- IntelliJ IDEA -->
      <svg width="72" height="72" viewBox="0 0 72 72"><defs><linearGradient id="ij" x1="0" y1="0" x2="1" y2=".7"><stop offset="0" stop-color="#d0416f"/><stop offset=".35" stop-color="#5a63c0"/><stop offset="1" stop-color="#2f7cf2"/></linearGradient></defs><rect x="2" y="2" width="68" height="68" fill="url(#ij)"/><rect x="11" y="11" width="50" height="50" fill="#000"/><text x="16" y="35" font-family="Liberation Mono" font-weight="700" font-size="28" textLength="28" lengthAdjust="spacingAndGlyphs" fill="#fff">IJ</text><rect x="17" y="52" width="18" height="4" fill="#fff"/></svg>
    </div>
    <div><!-- Freeform -->
      <svg width="72" height="72" viewBox="0 0 72 72"><defs><linearGradient id="ff" x1="0" y1="0" x2="0" y2="1"><stop offset="0" stop-color="#f4a63f"/><stop offset="1" stop-color="#ee6470"/></linearGradient><linearGradient id="ff2" x1="0" y1="0" x2="0" y2="1"><stop offset="0" stop-color="#62d5fa"/><stop offset="1" stop-color="#5aa0d0"/></linearGradient></defs><rect width="72" height="72" rx="16" fill="#fff"/><circle cx="29" cy="43.500" r="20.500" fill="url(#ff)"/><rect x="24" y="9.500" width="39" height="39" rx="4" fill="url(#ff2)" fill-opacity=".93"/><path d="M14 46C18 39 24 25 29 26.500 34 28 26 42 31 42.500 36 42 38 29 43 31 47 33 41 42 45 42.500 50 42 52 32 55.500 33 57 34 54 38 57 38.500q3-1 6-6" fill="none" stroke="#1b3a5c" stroke-width="3.600" stroke-linecap="round"/></svg>
    </div>
  </div>
  <span class="mr-[18px] ml-[22px] h-[82px] w-[2px] shrink-0 bg-[#8a6574]"></span>
  <div class="flex shrink-0 [&>div]:flex [&>div]:w-[92.200px] [&>div]:flex-col [&>div]:items-center">
    <div><!-- Terminal -->
      <svg width="72" height="72" viewBox="0 0 72 72"><defs><linearGradient id="te" x1="0" y1="0" x2="0" y2="1"><stop offset="0" stop-color="#cfdfe6"/><stop offset="1" stop-color="#6f6a6a"/></linearGradient></defs><rect width="72" height="72" rx="16" fill="url(#te)"/><rect x="3" y="3" width="66" height="66" rx="14" fill="#000"/><rect x="8.500" y="8.500" width="55" height="55" rx="8" fill="#262626"/><path d="M13 13l8 5-8 5" fill="none" stroke="#fff" stroke-width="2.600"/><path d="M24.500 27h10" stroke="#fff" stroke-width="2.600"/></svg>
    </div>
    <div><!-- Android Studio -->
      <svg width="72" height="72" viewBox="0 0 72 72"><rect width="72" height="72" rx="16" fill="#fff"/><path d="M42 31a17 12 0 0 1 18 11q0 6-6 10z" fill="#6ad58c"/><path d="M55 33l2-4M60 42h4" stroke="#6ad58c" stroke-width="1.500"/><path d="M33 27L19 59M39 27L53 59" stroke="#4c84ec" stroke-width="6" fill="none"/><path d="M36 10v8" stroke="#4c84ec" stroke-width="4"/><path d="M19 40q17 13 34 0" fill="none" stroke="#4c84ec" stroke-width="6"/><path d="M12 37l5-4 6 8-5 4z" fill="#4c84ec"/><path d="M16 60l.5-6 4 2zM56 60l-.5-6-4 2z" fill="#4c84ec"/><circle cx="36" cy="22.500" r="5" fill="#fff" stroke="#123848" stroke-width="3"/></svg>
      <span class="mt-[10px] size-2 rounded-full bg-[#c497ae]"></span>
    </div>
    <div><!-- QuickTime Player -->
      <svg width="72" height="72" viewBox="0 0 72 72"><defs><linearGradient id="qb" x1="0" y1="0" x2="0" y2="1"><stop offset="0" stop-color="#4c5055"/><stop offset="1" stop-color="#060607"/></linearGradient><linearGradient id="qg" x1="0" y1="0" x2="0" y2="1"><stop offset="0" stop-color="#e8eefa"/><stop offset="1" stop-color="#9a9ca2"/></linearGradient><linearGradient id="qc" x1="0" y1="0" x2="0" y2="1"><stop offset="0" stop-color="#1f66dc"/><stop offset="1" stop-color="#54e4fb"/></linearGradient></defs><rect width="72" height="72" rx="16" fill="url(#qb)"/><circle cx="36" cy="35.500" r="29" fill="url(#qg)"/><circle cx="36" cy="35.500" r="18.500" fill="url(#qc)"/><path d="M36 35.500L59 58" stroke="#b9bcc3" stroke-width="11" stroke-linecap="round"/><path d="M52 60l6-8 7 7v5h-9z" fill="#a2a5ab"/></svg>
      <span class="mt-[10px] size-2 rounded-full bg-[#c497ae]"></span>
    </div>
  </div>
  <span class="mr-[18px] ml-[19px] h-[82px] w-[2px] shrink-0 bg-[#8a6574]"></span>
  <!-- Trash -->
  <svg class="ml-[16px] shrink-0" width="66" height="76" viewBox="0 0 66 76"><defs><linearGradient id="tr" x1="0" y1="0" x2="1" y2="0"><stop offset="0" stop-color="#7b8184"/><stop offset=".3" stop-color="#5f6567"/><stop offset=".6" stop-color="#8a9093"/><stop offset="1" stop-color="#646a6c"/></linearGradient></defs><path d="M1 3l8 66q2 6 24 6t22-6L64 3Q48 12 33 12T1 3z" fill="url(#tr)" stroke="#9ba0a3" stroke-width="1"/><path d="M4 2L12-4l6 2 4-5 7 5 6-2 5-1 6 3 6-1 5 5-2 8-12 3-14 1-16-4z" fill="#e4e2e0"/><path d="M12-2l4 6M24 3l6 8M38-3l-4 9M48-1l6 8M10 6l5 3" stroke="#555" stroke-width="2"/><path d="M22 3l6 2-4 5z" fill="#3cbad2"/><path d="M31 3l3 2-2 8-3-2z" fill="#d0652e"/><path d="M40 1l7 5-5 4z" fill="#3d4a88"/><path d="M46 4l6 4-4 3z" fill="#7d4a2e"/></svg>
</div>

<!-- Screenshot thumbnail -->
<svg class="absolute top-[1580px] left-[2552px] drop-shadow-[0_4px_20px_rgba(0,0,0,0.45)]" width="304" height="196" viewBox="0 0 304 196">
  <defs><linearGradient id="mb" x1="0" x2="1" y1="0" y2="0"><stop offset="0" stop-color="#4e342e"/><stop offset=".45" stop-color="#8c3c20"/><stop offset="1" stop-color="#3d2029"/></linearGradient></defs>
  <rect width="304" height="196" rx="9" fill="#000"/><rect x="8" y="8" width="288" height="180" fill="#fff"/>
  <rect x="9" y="9" width="286" height="178" fill="#2d2e30"/>
  <rect x="9" y="9" width="286" height="5" fill="url(#mb)"/><rect x="9" y="14" width="286" height="16" fill="#3c3f41"/><rect x="9" y="19.500" width="286" height="5" fill="#3d4754"/>
  <g fill="#eee" font-family="Inter" font-size="2.700"><text x="19" y="12.500" font-weight="700">Android Studio</text><text x="42" y="12.500">File</text><text x="50" y="12.500">Edit</text><text x="59" y="12.500">View</text><text x="69" y="12.500">Navigate</text><text x="84" y="12.500">Code</text><text x="94" y="12.500">Refactor</text><text x="108" y="12.500">Build</text><text x="118" y="12.500">Run</text><text x="127" y="12.500">Tools</text><text x="138" y="12.500">Git</text><text x="145" y="12.500">Window</text><text x="159" y="12.500">Help</text><text x="265" y="12.500">Thu Oct 26 10:18 PM</text></g>
  <path d="M208 11.500h50" stroke="#eee" stroke-width="2.400" stroke-dasharray="3 4.500"/><circle cx="14" cy="11.500" r="1.400" fill="#eee"/>
  <circle cx="11" cy="17" r="1.200" fill="#ee6a5f"/><circle cx="15" cy="17" r="1.200" fill="#f5bf4f"/><circle cx="19" cy="17" r="1.200" fill="#61c554"/>
  <g fill="#aaa" font-family="Inter" font-size="2.600"><text x="131" y="17.800" font-weight="700">Running Devices - Tip Calculator</text><text x="9.500" y="23">Running Devices:</text><text x="38" y="23">Pixel XL API 28</text></g>
  <path d="M32 24.300h30" stroke="#5788c4" stroke-width=".9"/><path d="M10.500 27.300h60" stroke="#afb1b3" stroke-width="2.200" stroke-dasharray="2.600 2.600"/><path d="M26 27.300h7" stroke="#4a94c8" stroke-width="1.500" stroke-dasharray="1.500 3"/><path d="M282 22h12" stroke="#afb1b3" stroke-width="2" stroke-dasharray="2.500 2.500"/>
  <rect x="116.500" y="30" width="71" height="145" rx="11" fill="#e9e4e7" stroke="#b8b0b4" stroke-width=".8"/><path d="M188 65v9M188 86v18" stroke="#bbb"/><circle cx="128.500" cy="36" r="1.600" fill="#222"/><path d="M145 36h14" stroke="#c2c5ca" stroke-width="1.400"/><rect x="149.500" y="40.500" width="5" height="2.200" rx="1" fill="#111"/>
  <rect x="119.500" y="44.500" width="65" height="115" fill="#fdfbff"/><rect x="119.500" y="44.500" width="65" height="4" fill="#63539d"/><path d="M122 46.500h6M130 46.500h4M176 46.500h7" stroke="#fff" stroke-width="1.600" stroke-dasharray="2 .8"/>
  <text x="136" y="101" font-family="Roboto" font-size="3" fill="#222">$ 10.00</text><path d="M136 102.500h31.500" stroke="#777" stroke-width=".6"/>
  <rect x="119.500" y="114.500" width="65" height="37" fill="#e9eef0"/>
  <g fill="#3a4146" font-family="Roboto" font-size="4.800" text-anchor="middle"><text x="127.500" y="122">1</text><text x="143.500" y="122">2</text><text x="159.500" y="122">3</text><text x="175.500" y="121">-</text><text x="127.500" y="131">4</text><text x="143.500" y="131">5</text><text x="159.500" y="131">6</text><text x="127.500" y="140">7</text><text x="143.500" y="140">8</text><text x="159.500" y="140">9</text><text x="127.500" y="148">,</text><text x="143.500" y="149">0</text><text x="159.500" y="148">.</text></g>
  <path d="M173.500 129v1h4v-1M173.500 138.300l1.500-1.500h3v3h-3z" fill="none" stroke="#3a4146" stroke-width=".5"/><circle cx="175.500" cy="146.500" r="2.800" fill="#3aa594"/><path d="M174.200 146.500l1 1 1.800-2" fill="none" stroke="#fff" stroke-width=".6"/>
  <rect x="119.500" y="152" width="65" height="7" fill="#000"/><path d="M133 155.500h2M151 155.500h2M169 155.500h2M178 155.500h1.500" stroke="#bbb" stroke-width="1.800"/>
  <rect x="9" y="176" width="286" height="11" fill="#22090f"/><rect x="9" y="176" width="50" height="11" fill="#06111b"/><rect x="240" y="176" width="55" height="11" fill="#69201c"/><rect x="64" y="176.500" width="176" height="10.500" rx="3" fill="#421a2a"/>
  <g><rect x="66.500" y="177.500" width="7.200" height="7.500" rx="1.600" fill="#3f97f0"/><rect x="75.500" y="177.500" width="7.200" height="7.500" rx="1.600" fill="#b8a0a8"/><rect x="84.700" y="177.500" width="7.200" height="7.500" rx="1.600" fill="#4a94f0"/><rect x="93.900" y="177.500" width="7.200" height="7.500" rx="1.600" fill="#6fd55f"/><rect x="103" y="177.500" width="7.200" height="7.500" rx="1.600" fill="#7fe070"/><circle cx="110" cy="178.200" r="1.700" fill="#e14b3b"/><rect x="112.300" y="177.500" width="7.200" height="7.500" rx="1.600" fill="#d64a48"/><rect x="121.500" y="177.500" width="7.200" height="7.500" rx="1.600" fill="#efe0df"/><rect x="130.700" y="177.500" width="7.200" height="7.500" rx="1.600" fill="#77797b"/><circle cx="138" cy="178.200" r="1.700" fill="#e14b3b"/><rect x="140" y="177.500" width="7.200" height="7.500" rx="1.600" fill="#f5f3f3"/><circle cx="143.600" cy="181.200" r="2.800" fill="#db8a3a"/><circle cx="143.600" cy="181.200" r="1.300" fill="#3f7fe8"/><rect x="149" y="177.500" width="7.200" height="7.500" fill="#2fa6e4"/><rect x="150.300" y="178.800" width="5" height="5" fill="#08121a"/><rect x="158" y="177.500" width="7.200" height="7.500" fill="#e6e85f"/><rect x="159.300" y="178.800" width="4.700" height="5" fill="#000"/><rect x="167.500" y="177.500" width="7.200" height="7.500" rx="1.600" fill="#fff"/><circle cx="171" cy="181.200" r="2" fill="#ce375c"/><rect x="177" y="177.500" width="7" height="7.500" fill="#3d66cc"/><rect x="178.200" y="178.800" width="4.600" height="5" fill="#000"/><rect x="186" y="177.500" width="7.200" height="7.500" rx="1.600" fill="#fff"/><circle cx="189.500" cy="181.500" r="2.200" fill="#5aa0d0"/><rect x="199" y="177.500" width="7.200" height="7.500" rx="1.600" fill="#262626"/><rect x="208" y="177.500" width="7.200" height="7.500" rx="1.600" fill="#fff"/><path d="M211.600 179l-2 5M211.600 179l2 5" stroke="#4c84ec"/><rect x="217.500" y="177.500" width="7.200" height="7.500" rx="1.600" fill="#2a2b2e"/><circle cx="221" cy="181.200" r="2.500" fill="#7fb8ea"/><path d="M231.500 177.500h6l-.8 8h-4.400z" fill="#7c8285"/></g>
  <rect x="240" y="178" width="11" height="8" fill="#d6d6d6"/><rect x="254" y="182" width="12" height="5" fill="#f1f3f1"/><rect x="259" y="184" width="4" height="3" fill="#58b45a"/><rect x="271" y="178" width="11" height="9" fill="#1d1f24" stroke="#777" stroke-width=".5"/>
  <path d="M290 149v4M290 154.500v3M290 160v3M290 165v3" stroke="#777" stroke-width="2"/>
</svg>
</body>
</html>
